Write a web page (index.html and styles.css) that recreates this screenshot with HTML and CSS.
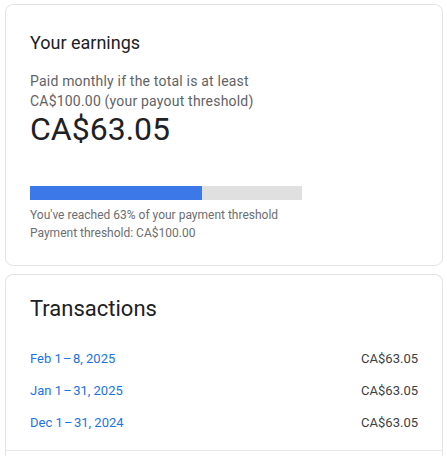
FILE: index.html
```html
<!DOCTYPE html>
<html>
<head>
<meta charset="utf-8">
<link rel="stylesheet" href="styles.css">
</head>
<body>
<div class="page">
  <section class="card earnings">
    <h2 class="title">Your earnings</h2>
    <p class="desc">Paid monthly if the total is at least<br>CA$100.00 (your payout threshold)</p>
    <div class="amount">CA$63.05</div>
    <div class="bar"><div class="fill" style="width:63.2%"></div></div>
    <p class="note">You've reached 63% of your payment threshold<br>Payment threshold: CA$100.00</p>
  </section>
  <section class="card transactions">
    <h2 class="title-lg">Transactions</h2>
    <ul class="rows">
      <li class="row"><a class="period" href="#">Feb 1&#8202;–&#8202;8, 2025</a><span class="sum">CA$63.05</span></li>
      <li class="row"><a class="period" href="#">Jan 1&#8202;–&#8202;31, 2025</a><span class="sum">CA$63.05</span></li>
      <li class="row"><a class="period" href="#">Dec 1&#8202;–&#8202;31, 2024</a><span class="sum">CA$63.05</span></li>
    </ul>
    <div class="divider"></div>
  </section>
</div>
</body>
</html>
```

FILE: styles.css
```css
html, body {
  margin: 0;
  padding: 0;
  background: #ffffff;
}
body {
  font-family: Roboto, "Liberation Sans", Arial, sans-serif;
  color: #202124;
}
.page {
  display: flex;
  flex-direction: column;
  gap: 8px;
  padding: 4px 4px 0 5px;
}
.card {
  border: 1px solid #e3e3e3;
  border-radius: 8px;
  background: #fff;
}
.earnings {
  padding: 26px 24px 24px 24px;
  height: 210px;
}
.title {
  margin: 0;
  font-size: 18px;
  line-height: 24px;
  font-weight: 400;
  color: #202124;
}
.desc {
  margin: 16px 0 0 0;
  font-size: 14px;
  line-height: 20px;
  letter-spacing: 0.2px;
  color: #5f6368;
}
.amount {
  font-size: 32px;
  line-height: 36px;
  color: #202124;
  margin-top: 0;
}
.bar {
  margin-top: 39px;
  width: 272px;
  height: 14px;
  background: #e0e0e0;
}
.fill {
  height: 100%;
  background: #3c78e8;
}
.note {
  margin: 6px 0 0 0;
  font-size: 12px;
  line-height: 18px;
  color: #6b6e72;
}
.transactions {
  padding: 20px 0 0 0;
  border-bottom: none;
  border-radius: 8px 8px 0 0;
  height: 170px;
}
.title-lg {
  margin: 0 24px;
  font-size: 22px;
  line-height: 28px;
  font-weight: 400;
  color: #202124;
}
.rows {
  list-style: none;
  margin: 19px 0 0 0;
  padding: 0 24px;
}
.row {
  display: flex;
  justify-content: space-between;
  align-items: center;
  height: 32px;
  font-size: 13px;
}
.period {
  color: #1a73e8;
  text-decoration: none;
}
.sum {
  color: #3c4043;
}
.divider {
  margin-top: 12px;
  height: 1px;
  background: #e8e8e8;
}
```
